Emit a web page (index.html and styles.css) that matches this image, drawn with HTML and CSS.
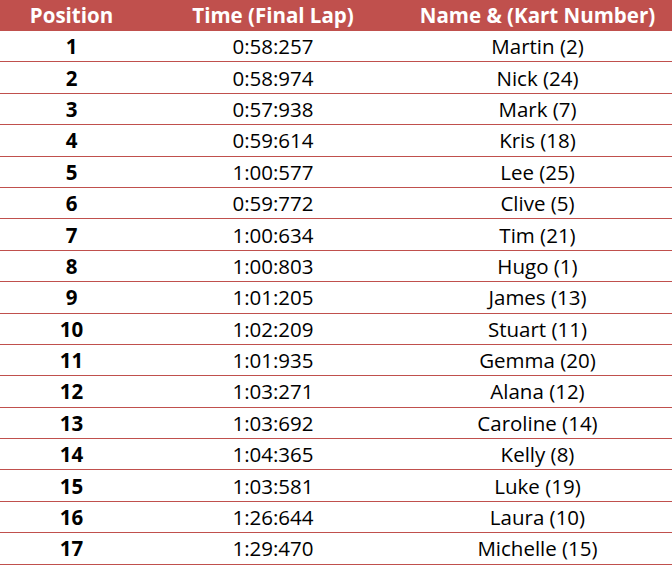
FILE: index.html
```html
<!DOCTYPE html>
<html>
<head>
<meta charset="utf-8">
<link rel="stylesheet" href="styles.css">
</head>
<body>
<table class="results">
  <thead>
    <tr><th class="c-pos">Position</th><th class="c-time">Time (Final Lap)</th><th class="c-name">Name &amp; (Kart Number)</th></tr>
  </thead>
  <tbody>
    <tr><td class="pos">1</td><td>0:58:257</td><td>Martin (2)</td></tr>
    <tr><td class="pos">2</td><td>0:58:974</td><td>Nick (24)</td></tr>
    <tr><td class="pos">3</td><td>0:57:938</td><td>Mark (7)</td></tr>
    <tr><td class="pos">4</td><td>0:59:614</td><td>Kris (18)</td></tr>
    <tr><td class="pos">5</td><td>1:00:577</td><td>Lee (25)</td></tr>
    <tr><td class="pos">6</td><td>0:59:772</td><td>Clive (5)</td></tr>
    <tr><td class="pos">7</td><td>1:00:634</td><td>Tim (21)</td></tr>
    <tr><td class="pos">8</td><td>1:00:803</td><td>Hugo (1)</td></tr>
    <tr><td class="pos">9</td><td>1:01:205</td><td>James (13)</td></tr>
    <tr><td class="pos">10</td><td>1:02:209</td><td>Stuart (11)</td></tr>
    <tr><td class="pos">11</td><td>1:01:935</td><td>Gemma (20)</td></tr>
    <tr><td class="pos">12</td><td>1:03:271</td><td>Alana (12)</td></tr>
    <tr><td class="pos">13</td><td>1:03:692</td><td>Caroline (14)</td></tr>
    <tr><td class="pos">14</td><td>1:04:365</td><td>Kelly (8)</td></tr>
    <tr><td class="pos">15</td><td>1:03:581</td><td>Luke (19)</td></tr>
    <tr><td class="pos">16</td><td>1:26:644</td><td>Laura (10)</td></tr>
    <tr><td class="pos">17</td><td>1:29:470</td><td>Michelle (15)</td></tr>
  </tbody>
</table>
</body>
</html>
```
FILE: styles.css
```css
html, body {
  margin: 0;
  padding: 0;
  background: #ffffff;
}
.results {
  width: 672px;
  border-collapse: collapse;
  table-layout: fixed;
  font-family: "Open Sans", Lato, sans-serif;
  font-size: 20.5px;
  color: #000000;
  font-variant-ligatures: none;
}
.results th {
  background: #c0504d;
  color: #ffffff;
  font-weight: bold;
  height: 31px;
  padding: 0;
  text-align: center;
  line-height: 31px;
}
.c-pos { width: 143px; }
.c-time { width: 260px; }
.c-name { width: 269px; }
.results td {
  height: 30.4px;
  padding: 0;
  text-align: center;
  border-bottom: 1px solid #c0504d;
  line-height: 30px;
}
.results td.pos {
  font-weight: bold;
}
```
